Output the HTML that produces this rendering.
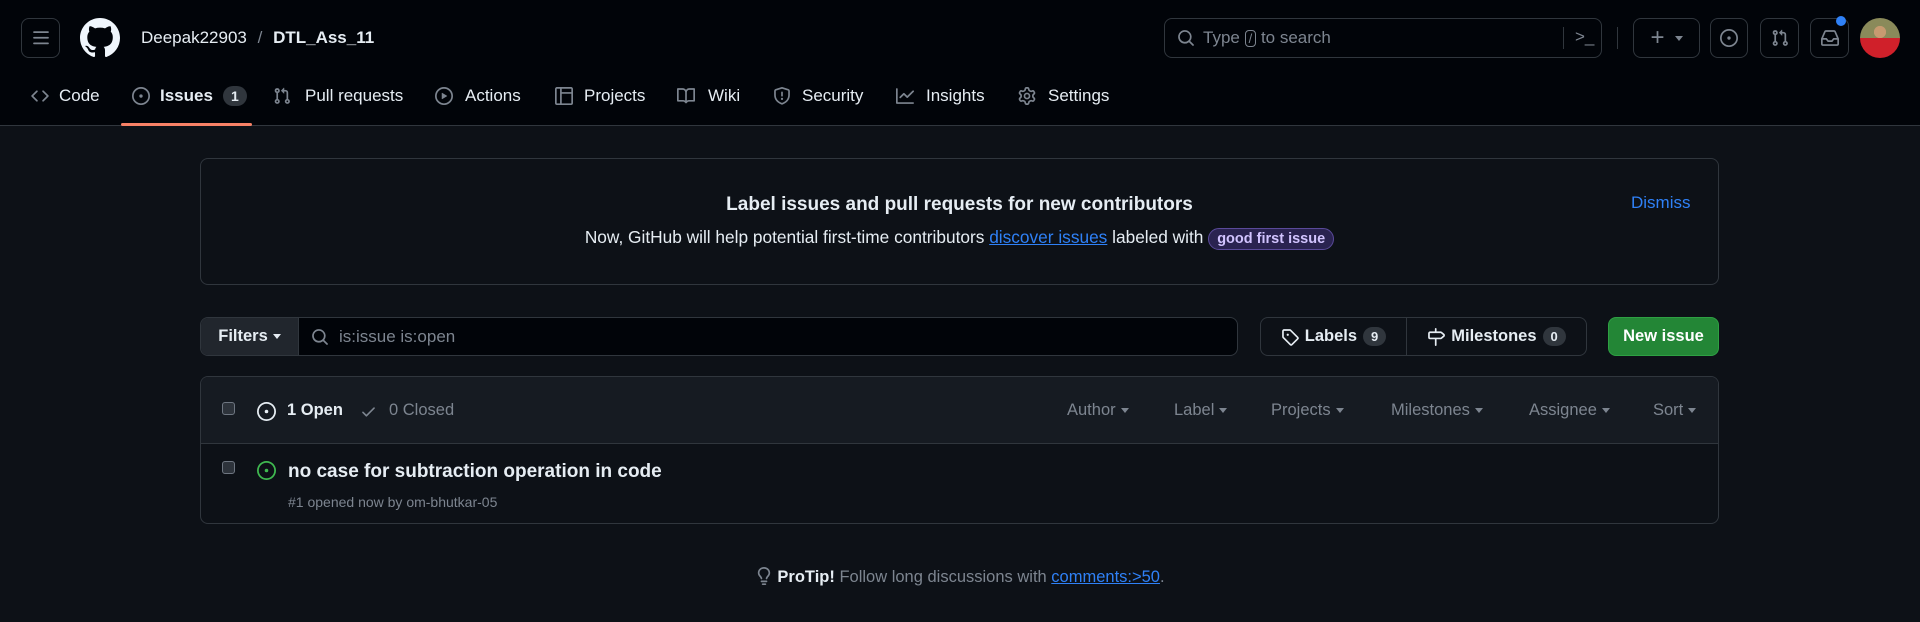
<!DOCTYPE html>
<html><head><meta charset="utf-8"><style>
*{box-sizing:border-box;margin:0;padding:0}
body{width:1920px;height:622px;background:#0d1117;color:#e6edf3;font-family:"Liberation Sans",sans-serif;font-size:17px;position:relative;overflow:hidden}
.abs{position:absolute}
.hdr{position:absolute;left:0;top:0;width:1920px;height:126px;background:#010409;border-bottom:1px solid #30363d}
.btn{position:absolute;border:1px solid #30363d;border-radius:8px;display:flex;align-items:center;justify-content:center}
svg{display:block}
.tab{position:absolute;top:86px;display:flex;align-items:center;gap:10px;color:#e6edf3;font-size:17px;white-space:nowrap}
.tab svg{fill:#7d8590}
.badge{background:#30363d;border-radius:12px;font-size:14px;padding:2px 8px;font-weight:bold}
.muted{color:#7d8590}
.cap{display:inline-block;width:0;height:0;border-left:4px solid transparent;border-right:4px solid transparent;border-top:5px solid currentColor;vertical-align:middle;margin-left:5px}
a{color:#2f81f7}
</style></head><body>
<div class="hdr"></div>
<div class="btn" style="left:21px;top:18px;width:39px;height:40px"><svg width="18" height="18" viewBox="0 0 16 16" fill="#7d8590"><path d="M1 2.75A.75.75 0 0 1 1.75 2h12.5a.75.75 0 0 1 0 1.5H1.75A.75.75 0 0 1 1 2.75Zm0 5A.75.75 0 0 1 1.75 7h12.5a.75.75 0 0 1 0 1.5H1.75A.75.75 0 0 1 1 7.75ZM1.75 12h12.5a.75.75 0 0 1 0 1.5H1.75a.75.75 0 0 1 0-1.5Z"/></svg></div>
<svg class="abs" style="left:80px;top:18px" width="40" height="40" viewBox="0 0 16 16" fill="#f0f6fc"><path d="M8 0c4.42 0 8 3.58 8 8a8.013 8.013 0 0 1-5.45 7.59c-.4.08-.55-.17-.55-.38 0-.27.01-1.130.01-2.2 0-.75-.25-1.23-.54-1.48 1.78-.2 3.65-.88 3.650-3.95 0-.88-.31-1.59-.82-2.15.08-.2.36-1.02-.08-2.12 0 0-.67-.22-2.2.82-.64-.18-1.32-.27-2-.27-.68 0-1.36.09-2 .27-1.53-1.03-2.2-.82-2.2-.82-.44 1.1-.16 1.92-.08 2.12-.51.56-.82 1.28-.82 2.15 0 3.06 1.86 3.75 3.64 3.95-.23.2-.44.55-.51 1.07-.46.21-1.61.55-2.33-.66-.15-.24-.6-.83-1.23-.82-.67.01-.27.38.01.53.34.19.73.9.82 1.13.16.45.68 1.31 2.69.94 0 .67.01 1.3.01 1.49 0 .21-.15.45-.55.38A7.995 7.995 0 0 1 0 8c0-4.42 3.58-8 8-8Z"/></svg>
<div class="abs" style="left:141px;top:28px;font-size:17px">Deepak22903 <span class="muted" style="margin:0 6px">/</span> <b>DTL_Ass_11</b></div>
<div class="btn" style="left:1164px;top:18px;width:438px;height:40px;justify-content:flex-start;padding-left:12px;color:#7d8590;font-size:17px">
<svg width="18" height="18" viewBox="0 0 16 16" fill="#7d8590"><path d="M10.68 11.74a6 6 0 0 1-7.922-8.982 6 6 0 0 1 8.982 7.922l3.040 3.04a.749.749 0 0 1-.326 1.275.749.749 0 0 1-.734-.215ZM11.5 7a4.499 4.499 0 1 0-8.997 0A4.499 4.499 0 0 0 11.5 7Z"/></svg>
<span style="margin-left:8px">Type <span style="border:1px solid #7d8590;border-radius:4px;padding:0 3px;font-size:13px">/</span> to search</span>
<span style="position:absolute;left:398px;top:8px;width:1px;height:22px;background:#30363d"></span>
<span style="position:absolute;left:410px;top:8px;font-size:17px">&gt;_</span></div>
<div class="abs" style="left:1617px;top:27px;width:1px;height:22px;background:#30363d"></div>
<div class="btn" style="left:1633px;top:18px;width:67px;height:40px;color:#7d8590;font-size:24px">+<span class="cap" style="margin-left:10px"></span></div>
<div class="btn" style="left:1710px;top:18px;width:38px;height:40px"><svg width="18" height="18" viewBox="0 0 16 16" fill="#7d8590"><path d="M8 9.5a1.5 1.5 0 1 0 0-3 1.5 1.5 0 0 0 0 3Z"/><path d="M8 0a8 8 0 1 1 0 16A8 8 0 0 1 8 0ZM1.5 8a6.5 6.5 0 1 0 13 0 6.5 6.5 0 0 0-13 0Z"/></svg></div>
<div class="btn" style="left:1760px;top:18px;width:39px;height:40px"><svg width="18" height="18" viewBox="0 0 16 16" fill="#7d8590"><path d="M1.5 3.25a2.25 2.25 0 1 1 3 2.122v5.256a2.251 2.251 0 1 1-1.5 0V5.372A2.25 2.25 0 0 1 1.5 3.25Zm5.677-.177L9.573.677A.25.25 0 0 1 10 .854V2.5h1A2.5 2.5 0 0 1 13.5 5v5.628a2.251 2.251 0 1 1-1.5 0V5a1 1 0 0 0-1-1h-1v1.646a.25.25 0 0 1-.427.177L7.177 3.427a.25.25 0 0 1 0-.354ZM3.75 2.5a.75.75 0 1 0 0 1.5.75.75 0 0 0 0-1.5Zm0 9.5a.75.75 0 1 0 0 1.5.75.75 0 0 0 0-1.5Zm8.25.75a.75.75 0 1 0 1.5 0 .75.75 0 0 0-1.5 0Z"/></svg></div>
<div class="btn" style="left:1810px;top:18px;width:39px;height:40px"><svg width="18" height="18" viewBox="0 0 16 16" fill="#7d8590"><path d="M2.8 2.06A1.75 1.75 0 0 1 4.41 1h7.18c.7 0 1.333.417 1.61 1.06l2.74 6.395c.04.093.06.194.06.295v4.5A1.75 1.75 0 0 1 14.25 15H1.75A1.75 1.75 0 0 1 0 13.25v-4.5c0-.101.02-.202.06-.295Zm1.61.44a.25.25 0 0 0-.23.152L1.887 8H4.75a.75.75 0 0 1 .6.3L6.625 10h2.75l1.275-1.7a.75.75 0 0 1 .6-.3h2.863L11.82 2.652a.25.25 0 0 0-.23-.152Zm10.09 7h-2.875l-1.275 1.7a.75.75 0 0 1-.6.3h-3.5a.75.75 0 0 1-.6-.3L4.375 9.5H1.5v3.75c0 .138.112.25.25.25h12.5a.25.25 0 0 0 .25-.25Z"/></svg></div>
<div class="abs" style="left:1836px;top:16px;width:10px;height:10px;border-radius:50%;background:#2f81f7"></div>
<div class="abs" style="left:1860px;top:18px;width:40px;height:40px;border-radius:50%;background:radial-gradient(circle at 50% 35%,#c79a70 0 18%,transparent 19%),linear-gradient(180deg,#8a8a5a 0 50%,#d0202a 50%)"></div>

<div class="tab" style="left:31px"><svg width="18" height="18" viewBox="0 0 16 16"><path d="m11.28 3.22 4.25 4.25a.75.75 0 0 1 0 1.06l-4.25 4.25a.749.749 0 0 1-1.275-.326.749.749 0 0 1 .215-.734L13.94 8l-3.72-3.72a.749.749 0 0 1 .326-1.275.749.749 0 0 1 .734.215Zm-6.56 0a.751.751 0 0 1 1.042.018.751.751 0 0 1 .018 1.042L2.06 8l3.72 3.72a.749.749 0 0 1-.326 1.275.749.749 0 0 1-.734-.215L.47 8.53a.75.75 0 0 1 0-1.06Z"/></svg>Code</div>
<div class="tab" style="left:132px"><svg width="18" height="18" viewBox="0 0 16 16"><path d="M8 9.5a1.5 1.5 0 1 0 0-3 1.5 1.5 0 0 0 0 3Z"/><path d="M8 0a8 8 0 1 1 0 16A8 8 0 0 1 8 0ZM1.5 8a6.5 6.5 0 1 0 13 0 6.5 6.5 0 0 0-13 0Z"/></svg><b>Issues</b><span class="badge">1</span></div>
<div class="abs" style="left:121px;top:123px;width:131px;height:3px;background:#f78166;border-radius:2px"></div>
<div class="tab" style="left:273px"><svg width="18" height="18" viewBox="0 0 16 16"><path d="M1.5 3.25a2.25 2.25 0 1 1 3 2.122v5.256a2.251 2.251 0 1 1-1.5 0V5.372A2.25 2.25 0 0 1 1.5 3.25Zm5.677-.177L9.573.677A.25.25 0 0 1 10 .854V2.5h1A2.5 2.5 0 0 1 13.5 5v5.628a2.251 2.251 0 1 1-1.5 0V5a1 1 0 0 0-1-1h-1v1.646a.25.25 0 0 1-.427.177L7.177 3.427a.25.25 0 0 1 0-.354ZM3.75 2.5a.75.75 0 1 0 0 1.5.75.75 0 0 0 0-1.5Zm0 9.5a.75.75 0 1 0 0 1.5.75.75 0 0 0 0-1.5Zm8.25.75a.75.75 0 1 0 1.5 0 .75.75 0 0 0-1.5 0Z"/></svg><span style="margin-left:4px">Pull requests</span></div>
<div class="tab" style="left:435px"><svg width="18" height="18" viewBox="0 0 16 16"><path d="M8 0a8 8 0 1 1 0 16A8 8 0 0 1 8 0ZM1.5 8a6.5 6.5 0 1 0 13 0 6.5 6.5 0 0 0-13 0Zm4.879-2.773 4.264 2.559a.25.25 0 0 1 0 .428l-4.264 2.559A.25.25 0 0 1 6 10.559V5.442a.25.25 0 0 1 .379-.215Z"/></svg><span style="margin-left:2px">Actions</span></div>
<div class="tab" style="left:555px"><svg width="18" height="18" viewBox="0 0 16 16"><path d="M1.75 0h12.5C15.216 0 16 .784 16 1.75v12.5A1.75 1.75 0 0 1 14.25 16H1.75A1.75 1.75 0 0 1 0 14.25V1.75C0 .784.784 0 1.75 0ZM1.5 1.75v12.5c0 .138.112.25.25.25H4.5v-13H1.75a.25.25 0 0 0-.25.25ZM6 14.5h8.25a.25.25 0 0 0 .25-.25V6H6ZM14.5 4.5V1.75a.25.25 0 0 0-.25-.25H6v3Z"/></svg><span style="margin-left:1px">Projects</span></div>
<div class="tab" style="left:677px"><svg width="18" height="18" viewBox="0 0 16 16"><path d="M0 1.75A.75.75 0 0 1 .75 1h4.253c1.227 0 2.317.59 3 1.501A3.743 3.743 0 0 1 11.006 1h4.245a.75.75 0 0 1 .75.75v10.5a.75.75 0 0 1-.75.75h-4.507a2.25 2.25 0 0 0-1.591.659l-.622.621a.75.75 0 0 1-1.06 0l-.622-.621A2.25 2.25 0 0 0 5.258 13H.75a.75.75 0 0 1-.75-.75Zm7.251 10.324.004-5.073-.002-2.253A2.25 2.25 0 0 0 5.003 2.5H1.5v9h3.757a3.75 3.75 0 0 1 1.994.574ZM8.755 4.75l-.004 7.322a3.752 3.752 0 0 1 1.992-.572H14.5v-9h-3.495a2.25 2.25 0 0 0-2.25 2.25Z"/></svg><span style="margin-left:3px">Wiki</span></div>
<div class="tab" style="left:773px"><svg width="18" height="18" viewBox="0 0 16 16"><path d="M7.467.133a1.748 1.748 0 0 1 1.066 0l5.25 1.68A1.75 1.75 0 0 1 15 3.48V7c0 1.566-.32 3.182-1.303 4.682-.983 1.498-2.585 2.813-5.032 3.855a1.697 1.697 0 0 1-1.33 0c-2.447-1.042-4.049-2.357-5.032-3.855C1.32 10.182 1 8.566 1 7V3.48a1.755 1.755 0 0 1 1.217-1.667Zm.61 1.429a.25.25 0 0 0-.153 0l-5.25 1.68a.25.25 0 0 0-.174.238V7c0 1.358.275 2.666 1.057 3.86.784 1.194 2.121 2.34 4.366 3.297a.196.196 0 0 0 .154 0c2.245-.956 3.582-2.104 4.366-3.298C13.225 9.666 13.5 8.36 13.5 7V3.48a.251.251 0 0 0-.174-.237l-5.25-1.68ZM8.75 4.75v3a.75.75 0 0 1-1.5 0v-3a.75.75 0 0 1 1.5 0ZM9 10.5a1 1 0 1 1-2 0 1 1 0 0 1 2 0Z"/></svg><span style="margin-left:1px">Security</span></div>
<div class="tab" style="left:896px"><svg width="18" height="18" viewBox="0 0 16 16"><path d="M1.5 1.75V13.5h13.75a.75.75 0 0 1 0 1.5H.75a.75.75 0 0 1-.75-.75V1.75a.75.75 0 0 1 1.5 0Zm14.28 2.53-5.25 5.25a.75.75 0 0 1-1.060 0L7 7.06 4.28 9.78a.751.751 0 0 1-1.042-.018.751.751 0 0 1-.018-1.042l3.25-3.25a.75.75 0 0 1 1.06 0L10 7.94l4.72-4.72a.751.751 0 0 1 1.042.018.751.751 0 0 1 .018 1.042Z"/></svg><span style="margin-left:2px">Insights</span></div>
<div class="tab" style="left:1018px"><svg width="18" height="18" viewBox="0 0 16 16"><path d="M8 0a8.2 8.2 0 0 1 .701.031C9.444.095 9.99.645 10.16 1.29l.288 1.107c.018.066.079.158.212.224.231.114.454.243.668.386.123.082.233.09.299.071l1.103-.303c.644-.176 1.392.021 1.82.63.27.385.506.792.704 1.218.315.675.111 1.422-.364 1.891l-.814.806c-.049.048-.098.147-.088.294.016.257.016.515 0 .772-.01.147.038.246.088.294l.814.806c.475.469.679 1.216.364 1.891a7.977 7.977 0 0 1-.704 1.217c-.428.61-1.176.807-1.82.63l-1.102-.302c-.067-.019-.177-.011-.3.071a5.909 5.909 0 0 1-.668.386c-.133.066-.194.158-.211.224l-.29 1.106c-.168.646-.715 1.196-1.458 1.26a8.006 8.006 0 0 1-1.402 0c-.743-.064-1.289-.614-1.458-1.26l-.289-1.106c-.018-.066-.079-.158-.212-.224a5.738 5.738 0 0 1-.668-.386c-.123-.082-.233-.09-.299-.071l-1.103.303c-.644.176-1.392-.021-1.82-.63a8.12 8.12 0 0 1-.704-1.218c-.315-.675-.111-1.422.363-1.891l.815-.806c.05-.048.098-.147.088-.294a6.214 6.214 0 0 1 0-.772c.01-.147-.038-.246-.088-.294l-.815-.806C.635 6.045.431 5.298.746 4.623a7.92 7.92 0 0 1 .704-1.217c.428-.61 1.176-.807 1.82-.63l1.102.302c.067.019.177.011.3-.071.214-.143.437-.272.668-.386.133-.066.194-.158.211-.224l.29-1.106C6.009.645 6.556.095 7.299.03 7.53.01 7.764 0 8 0Zm-.571 1.525c-.036.003-.108.036-.137.146l-.289 1.105c-.147.561-.549.967-.998 1.189-.173.086-.34.183-.5.29-.417.278-.97.423-1.529.27l-1.103-.303c-.109-.03-.175.016-.195.045-.22.312-.412.644-.573.99-.014.031-.021.11.059.19l.815.806c.411.406.562.957.53 1.456a4.709 4.709 0 0 0 0 .582c.032.499-.119 1.05-.53 1.456l-.815.806c-.081.08-.073.159-.059.19.162.346.353.677.573.989.02.03.085.076.195.046l1.102-.303c.56-.153 1.113-.008 1.53.27.161.107.328.204.501.29.447.222.85.629.997 1.189l.289 1.105c.029.109.101.143.137.146a6.6 6.6 0 0 0 1.142 0c.036-.003.108-.036.137-.146l.289-1.105c.147-.561.549-.967.998-1.189.173-.086.34-.183.5-.29.417-.278.97-.423 1.529-.27l1.103.303c.109.029.175-.016.195-.045.22-.313.411-.644.573-.99.014-.031.021-.11-.059-.19l-.815-.806c-.411-.406-.562-.957-.53-1.456a4.709 4.709 0 0 0 0-.582c-.032-.499.119-1.05.53-1.456l.815-.806c.081-.08.073-.159.059-.19a6.464 6.464 0 0 0-.573-.989c-.02-.03-.085-.076-.195-.046l-1.102.303c-.56.153-1.113.008-1.53-.27a4.44 4.44 0 0 0-.501-.29c-.447-.222-.85-.629-.997-1.189l-.289-1.105c-.029-.11-.101-.143-.137-.146a6.6 6.6 0 0 0-1.142 0ZM11 8a3 3 0 1 1-6 0 3 3 0 0 1 6 0ZM9.5 8a1.5 1.5 0 1 0-3.001.001A1.5 1.5 0 0 0 9.5 8Z"/></svg><span style="margin-left:2px">Settings</span></div>

<!-- banner -->
<div class="abs" style="left:200px;top:158px;width:1519px;height:127px;border:1px solid #30363d;border-radius:8px"></div>
<div class="abs" style="left:200px;top:194px;width:1519px;text-align:center;font-size:19px;font-weight:bold">Label issues and pull requests for new contributors</div>
<div class="abs" style="left:200px;top:227px;width:1519px;text-align:center;font-size:17.3px">Now, GitHub will help potential first-time contributors <a style="text-decoration:underline">discover issues</a> labeled with <span style="display:inline-block;border:1px solid #5a4a9a;background:#2a2350;color:#d2c4ff;border-radius:12px;padding:2px 8px;font-size:14.5px;font-weight:bold">good first issue</span></div>
<div class="abs" style="left:1631px;top:193px;color:#2f81f7;font-size:17px">Dismiss</div>

<!-- filter row -->
<div class="abs" style="left:200px;top:317px;width:1038px;height:39px;border:1px solid #30363d;border-radius:8px;background:#010409;overflow:hidden">
<div style="position:absolute;left:0;top:0;width:98px;height:37px;background:#21262d;border-right:1px solid #30363d;display:flex;align-items:center;justify-content:center;font-weight:bold;font-size:16.5px">Filters<span class="cap"></span></div>
<svg style="position:absolute;left:110px;top:10px" width="18" height="18" viewBox="0 0 16 16" fill="#7d8590"><path d="M10.68 11.74a6 6 0 0 1-7.922-8.982 6 6 0 0 1 8.982 7.922l3.04 3.04a.749.749 0 0 1-.326 1.275.749.749 0 0 1-.734-.215ZM11.5 7a4.499 4.499 0 1 0-8.997 0A4.499 4.499 0 0 0 11.5 7Z"/></svg>
<div style="position:absolute;left:138px;top:9px;color:#7d8590;font-size:17px">is:issue is:open</div></div>
<div class="abs" style="left:1260px;top:317px;width:327px;height:39px;border:1px solid #30363d;border-radius:8px;display:flex;align-items:center;font-weight:bold;font-size:16.5px">
<div style="width:146px;height:100%;border-right:1px solid #30363d;display:flex;align-items:center;justify-content:center;gap:6px"><svg width="18" height="18" viewBox="0 0 16 16" fill="#e6edf3"><path d="M1 7.775V2.75C1 1.784 1.784 1 2.75 1h5.025c.464 0 .91.184 1.238.513l6.25 6.25a1.75 1.75 0 0 1 0 2.474l-5.026 5.026a1.75 1.75 0 0 1-2.474 0l-6.25-6.25A1.752 1.752 0 0 1 1 7.775Zm1.5 0c0 .066.026.13.073.177l6.25 6.25a.25.25 0 0 0 .354 0l5.025-5.025a.25.25 0 0 0 0-.354l-6.25-6.25a.25.25 0 0 0-.177-.073H2.75a.25.25 0 0 0-.25.25ZM6 5a1 1 0 1 1 0 2 1 1 0 0 1 0-2Z"/></svg>Labels<span class="badge" style="font-size:13px">9</span></div>
<div style="flex:1;display:flex;align-items:center;justify-content:center;gap:6px"><svg width="18" height="18" viewBox="0 0 16 16" fill="#e6edf3"><path d="M7.75 0a.75.75 0 0 1 .75.75V3h3.634c.414 0 .814.147 1.13.414l2.07 1.75a1.75 1.75 0 0 1 0 2.672l-2.07 1.75a1.75 1.75 0 0 1-1.13.414H8.5v5.25a.75.75 0 0 1-1.5 0V10H2.75A1.75 1.75 0 0 1 1 8.25v-3.5C1 3.784 1.784 3 2.75 3H7V.75A.75.75 0 0 1 7.75 0Zm4.384 8.5a.25.25 0 0 0 .161-.06l2.07-1.75a.248.248 0 0 0 0-.38l-2.07-1.75a.25.25 0 0 0-.161-.06H2.75a.25.25 0 0 0-.25.25v3.5c0 .138.112.25.25.25h9.384Z"/></svg>Milestones<span class="badge" style="font-size:13px">0</span></div></div>
<div class="abs" style="left:1608px;top:317px;width:111px;height:39px;background:#238636;border:1px solid #2ea043;border-radius:8px;display:flex;align-items:center;justify-content:center;font-weight:bold;font-size:16.5px;color:#fff">New issue</div>

<!-- list -->
<div class="abs" style="left:200px;top:376px;width:1519px;height:148px;border:1px solid #30363d;border-radius:8px;overflow:hidden">
<div style="height:67px;background:#161b22;border-bottom:1px solid #30363d"></div></div>
<div class="abs" style="left:222px;top:402px;width:13px;height:13px;border:1px solid #6e7681;border-radius:3px;background:#2d333b"></div>
<svg class="abs" style="left:257px;top:402px" width="19" height="19" viewBox="0 0 16 16" fill="#e6edf3"><path d="M8 9.5a1.5 1.5 0 1 0 0-3 1.5 1.5 0 0 0 0 3Z"/><path d="M8 0a8 8 0 1 1 0 16A8 8 0 0 1 8 0ZM1.5 8a6.5 6.5 0 1 0 13 0 6.5 6.5 0 0 0-13 0Z"/></svg>
<div class="abs" style="left:287px;top:401px;font-weight:bold;font-size:16.5px">1 Open</div>
<svg class="abs" style="left:360px;top:403px" width="17" height="17" viewBox="0 0 16 16" fill="#7d8590"><path d="M13.78 4.22a.75.75 0 0 1 0 1.06l-7.25 7.25a.75.75 0 0 1-1.06 0L2.22 9.28a.751.751 0 0 1 .018-1.042.751.751 0 0 1 1.042-.018L6 10.94l6.72-6.72a.75.75 0 0 1 1.06 0Z"/></svg>
<div class="abs muted" style="left:389px;top:401px;font-size:16.5px">0 Closed</div>
<div class="abs muted" style="left:1067px;top:401px;font-size:16.5px">Author<span class="cap"></span></div>
<div class="abs muted" style="left:1174px;top:401px;font-size:16.5px">Label<span class="cap"></span></div>
<div class="abs muted" style="left:1271px;top:401px;font-size:16.5px">Projects<span class="cap"></span></div>
<div class="abs muted" style="left:1391px;top:401px;font-size:16.5px">Milestones<span class="cap"></span></div>
<div class="abs muted" style="left:1529px;top:401px;font-size:16.5px">Assignee<span class="cap"></span></div>
<div class="abs muted" style="left:1653px;top:401px;font-size:16.5px">Sort<span class="cap"></span></div>
<div class="abs" style="left:222px;top:461px;width:13px;height:13px;border:1px solid #6e7681;border-radius:3px;background:#2d333b"></div>
<svg class="abs" style="left:257px;top:461px" width="19" height="19" viewBox="0 0 16 16" fill="#3fb950"><path d="M8 9.5a1.5 1.5 0 1 0 0-3 1.5 1.5 0 0 0 0 3Z"/><path d="M8 0a8 8 0 1 1 0 16A8 8 0 0 1 8 0ZM1.5 8a6.5 6.5 0 1 0 13 0 6.5 6.5 0 0 0-13 0Z"/></svg>
<div class="abs" style="left:288px;top:461px;font-weight:bold;font-size:19px">no case for subtraction operation in code</div>
<div class="abs muted" style="left:288px;top:494px;font-size:14px">#1 opened now by om-bhutkar-05</div>

<!-- protip -->
<div class="abs" style="left:0;top:567px;width:1920px;text-align:center;font-size:16.5px;color:#7d8590"><svg style="display:inline-block;vertical-align:-3px;margin-right:4px" width="18" height="18" viewBox="0 0 16 16" fill="#7d8590"><path d="M8 1.5c-2.363 0-4 1.69-4 3.75 0 .984.424 1.625.984 2.304l.214.253c.223.264.47.556.673.848.284.411.537.896.621 1.49a.75.75 0 0 1-1.484.211c-.04-.282-.163-.547-.37-.847a8.456 8.456 0 0 0-.542-.68c-.084-.1-.173-.205-.268-.32C3.201 7.75 2.5 6.766 2.5 5.25 2.5 2.31 4.863 0 8 0s5.5 2.31 5.5 5.250c0 1.516-.701 2.5-1.328 3.259-.095.115-.184.22-.268.319-.207.245-.383.453-.541.681-.208.3-.33.565-.37.847a.751.751 0 0 1-1.485-.212c.084-.593.337-1.078.621-1.489.203-.292.45-.584.673-.848.075-.088.147-.173.213-.253.561-.679.985-1.32.985-2.304 0-2.06-1.637-3.75-4-3.75ZM5.75 12h4.5a.75.75 0 0 1 0 1.5h-4.5a.75.75 0 0 1 0-1.5ZM6 15.25a.75.75 0 0 1 .75-.75h2.5a.75.75 0 0 1 0 1.5h-2.5a.75.75 0 0 1-.75-.75Z"/></svg><b style="color:#e6edf3">ProTip!</b> Follow long discussions with <a style="text-decoration:underline">comments:&gt;50</a>.</div>
</body></html>
